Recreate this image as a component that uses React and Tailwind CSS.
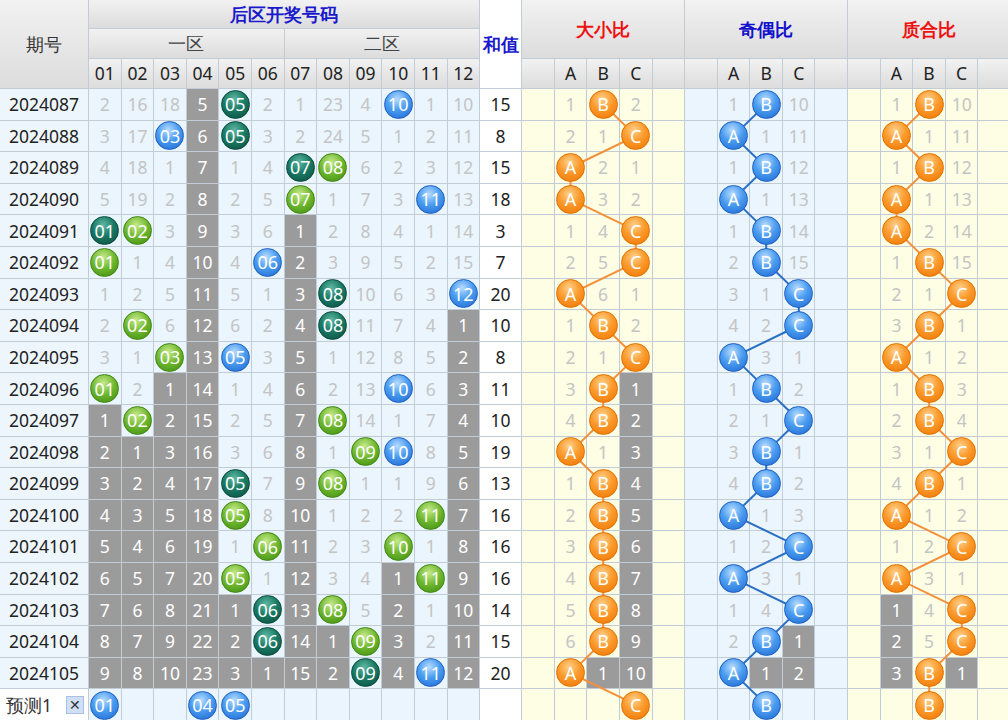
const NUMS = [
  ["2024087", "2,16,18,5g,05t,2,1,23,4,10b,1,10", 15],
  ["2024088", "3,17,03b,6g,05t,3,2,24,5,1,2,11", 8],
  ["2024089", "4,18,1,7g,1,4,07t,08n,6,2,3,12", 15],
  ["2024090", "5,19,2,8g,2,5,07n,1,7,3,11b,13", 18],
  ["2024091", "01t,02n,3,9g,3,6,1g,2,8,4,1,14", 3],
  ["2024092", "01n,1,4,10g,4,06b,2g,3,9,5,2,15", 7],
  ["2024093", "1,2,5,11g,5,1,3g,08t,10,6,3,12b", 20],
  ["2024094", "2,02n,6,12g,6,2,4g,08t,11,7,4,1g", 10],
  ["2024095", "3,1,03n,13g,05b,3,5g,1,12,8,5,2g", 8],
  ["2024096", "01n,2,1g,14g,1,4,6g,2,13,10b,6,3g", 11],
  ["2024097", "1g,02n,2g,15g,2,5,7g,08n,14,1,7,4g", 10],
  ["2024098", "2g,1g,3g,16g,3,6,8g,1,09n,10b,8,5g", 19],
  ["2024099", "3g,2g,4g,17g,05t,7,9g,08n,1,1,9,6g", 13],
  ["2024100", "4g,3g,5g,18g,05n,8,10g,1,2,2,11n,7g", 16],
  ["2024101", "5g,4g,6g,19g,1,06n,11g,2,3,10n,1,8g", 16],
  ["2024102", "6g,5g,7g,20g,05n,1,12g,3,4,1g,11n,9g", 16],
  ["2024103", "7g,6g,8g,21g,1g,06t,13g,08n,5,2g,1,10g", 14],
  ["2024104", "8g,7g,9g,22g,2g,06t,14g,1g,09n,3g,2,11g", 15],
  ["2024105", "9g,8g,10g,23g,3g,1g,15g,2g,09t,4g,11b,12g", 20],
];

const RATIOS = [
  {
    title: "大小比",
    color: "text-[#ee1111]",
    bg: "bg-[#fefee4]",
    ball: "o",
    line: "#f5903a",
    rows: "1,B,2|2,1,C|A,2,1|A,3,2|1,4,C|2,5,C|A,6,1|1,B,2|2,1,C|3,B,1g|4,B,2g|A,1,3g|1,B,4g|2,B,5g|3,B,6g|4,B,7g|5,B,8g|6,B,9g|A,1g,10g|,,C",
  },
  {
    title: "奇偶比",
    color: "text-[#1111cc]",
    bg: "bg-[#eaf5fe]",
    ball: "b",
    line: "#2a6fc4",
    rows: "1,B,10|A,1,11|1,B,12|A,1,13|1,B,14|2,B,15|3,1,C|4,2,C|A,3,1|1,B,2|2,1,C|3,B,1|4,B,2|A,1,3|1,2,C|A,3,1|1,4,C|2,B,1g|A,1g,2g|,B,",
  },
  {
    title: "质合比",
    color: "text-[#ee1111]",
    bg: "bg-[#fefee4]",
    ball: "o",
    line: "#f5903a",
    rows: "1,B,10|A,1,11|1,B,12|A,1,13|A,2,14|1,B,15|2,1,C|3,B,1|A,1,2|1,B,3|2,B,4|3,1,C|4,B,1|A,1,2|1,2,C|A,3,1|1g,4,C|2g,5,C|3g,B,1g|,B,",
  },
];

const BALL = {
  b: "bg-[radial-gradient(circle_at_45%_30%,#b8dcff_0%,#4a9cf0_45%,#1d66d0_100%)] border-[#1e5fc0]",
  t: "bg-[radial-gradient(circle_at_45%_30%,#5fb8a4_0%,#1a7a64_45%,#0a4d3e_100%)] border-[#0a4a3c]",
  n: "bg-[radial-gradient(circle_at_45%_30%,#c6ea8a_0%,#6cb52c_50%,#3f8a12_100%)] border-[#3f8612]",
  o: "bg-[radial-gradient(circle_at_45%_30%,#ffd08a_0%,#fb9a2c_45%,#ee7300_100%)] border-[#e07000]",
};

const COLW = 32.6;
const ROWH = 31.6;
const Y0 = 89;
const X0 = 522.2;

function Ball({ kind, children }) {
  return (
    <div
      className={`relative z-20 shrink-0 w-[29px] h-[29px] rounded-full border flex items-center justify-center text-white text-[18px] leading-none ${BALL[kind]}`}
    >
      {children}
    </div>
  );
}

function Cell({ v, bg }) {
  if (!v) return <div className={`${bg}`} />;
  const m = v.match(/^(\d+)([gtnb]?)$/);
  const num = m[1];
  const k = m[2];
  if (k === "g")
    return (
      <div className="bg-[#9b9b9b] text-white flex items-center justify-center">
        {num}
      </div>
    );
  if (k)
    return (
      <div className={`${bg} flex items-center justify-center`}>
        <Ball kind={k}>{num}</Ball>
      </div>
    );
  return (
    <div className={`${bg} text-[#c4c4c4] flex items-center justify-center`}>
      {num}
    </div>
  );
}

function RatioCell({ v, bg, ball }) {
  if (!v) return <div className={bg} />;
  if (/^[ABC]$/.test(v))
    return (
      <div className={`${bg} flex items-center justify-center`}>
        <Ball kind={ball}>{v}</Ball>
      </div>
    );
  if (v.endsWith("g"))
    return (
      <div className="bg-[#9b9b9b] text-white flex items-center justify-center">
        {v.slice(0, -1)}
      </div>
    );
  return (
    <div className={`${bg} text-[#c4c4c4] flex items-center justify-center`}>
      {v}
    </div>
  );
}

const hdr = "bg-[linear-gradient(#f2f2f2,#dcdcdc)] flex items-center justify-center";

export default function App() {
  const ratioRows = RATIOS.map((r) => r.rows.split("|").map((x) => x.split(",")));
  const pred = ["01", "", "", "04", "05", "", "", "", "", "", "", ""];

  return (
    <div className="w-[1008px] h-[720px] overflow-hidden bg-white relative font-['Noto_Sans','Noto_Sans_CJK_SC',sans-serif] text-[17.5px] text-[#222]">
      <div className="grid gap-px bg-[#c2ccd6] w-max grid-cols-[88px_repeat(12,31.6px)_41px_repeat(15,31.6px)] grid-rows-[28px_29px_29px_repeat(19,30.6px)_32px]">
        {/* header */}
        <div className={`${hdr} row-span-3 text-[#333]`}>期号</div>
        <div className={`${hdr} col-span-12 text-[#1a1acc] font-bold`}>后区开奖号码</div>
        <div className="row-span-3 bg-white flex items-center justify-center text-[#1a1acc] font-bold">和值</div>
        {RATIOS.map((r) => (
          <div key={r.title} className={`${hdr} col-span-5 row-span-2 font-bold ${r.color}`}>
            {r.title}
          </div>
        ))}
        <div className={`${hdr} col-span-6 text-[#444]`}>一区</div>
        <div className={`${hdr} col-span-6 text-[#444]`}>二区</div>
        {Array.from({ length: 12 }, (_, i) => (
          <div key={i} className={hdr}>
            {String(i + 1).padStart(2, "0")}
          </div>
        ))}
        {RATIOS.map((r) =>
          ["", "A", "B", "C", ""].map((l, i) => (
            <div key={r.title + i} className={hdr}>
              {l}
            </div>
          ))
        )}

        {/* data */}
        {NUMS.map(([p, s, sum], ri) => (
          <div key={p} className="contents">
            <div className="bg-[#eef6fd] flex items-center justify-center">{p}</div>
            {s.split(",").map((v, i) => (
              <Cell key={i} v={v} bg="bg-[#eaf5fe]" />
            ))}
            <div className="bg-white flex items-center justify-center">{sum}</div>
            {RATIOS.map((r, si) => (
              <div key={si} className="contents">
                <div className={r.bg} />
                {ratioRows[si][ri].map((v, i) => (
                  <RatioCell key={i} v={v} bg={r.bg} ball={r.ball} />
                ))}
                <div className={r.bg} />
              </div>
            ))}
          </div>
        ))}

        {/* prediction row */}
        <div className="bg-white flex items-center pl-[6px] gap-[14px] text-[#333]">
          预测1
          <span className="w-[18px] h-[18px] bg-[#cfe0f6] border border-[#a9c2e4] flex items-center justify-center text-[14px] leading-none">
            ✕
          </span>
        </div>
        {pred.map((v, i) => (
          <div key={i} className="bg-[#eaf5fe] flex items-center justify-center">
            {v && <Ball kind="b">{v}</Ball>}
          </div>
        ))}
        <div className="bg-white" />
        {RATIOS.map((r, si) => (
          <div key={si} className="contents">
            <div className={r.bg} />
            {ratioRows[si][19].map((v, i) => (
              <RatioCell key={i} v={v} bg={r.bg} ball={r.ball} />
            ))}
            <div className={r.bg} />
          </div>
        ))}
      </div>

      {/* connecting lines */}
      <svg className="absolute left-0 top-0 z-10 pointer-events-none" width="1008" height="720">
        {RATIOS.map((r, si) => {
          const pts = ratioRows[si].map((row, ri) => {
            const k = row.findIndex((v) => /^[ABC]$/.test(v));
            return [X0 + (si * 5 + 1 + k) * COLW + 15.8, Y0 + ri * ROWH + 15.3];
          });
          return (
            <polyline
              key={si}
              points={pts.map((p) => p.join(",")).join(" ")}
              fill="none"
              stroke={r.line}
              strokeWidth="2"
            />
          );
        })}
      </svg>
    </div>
  );
}
